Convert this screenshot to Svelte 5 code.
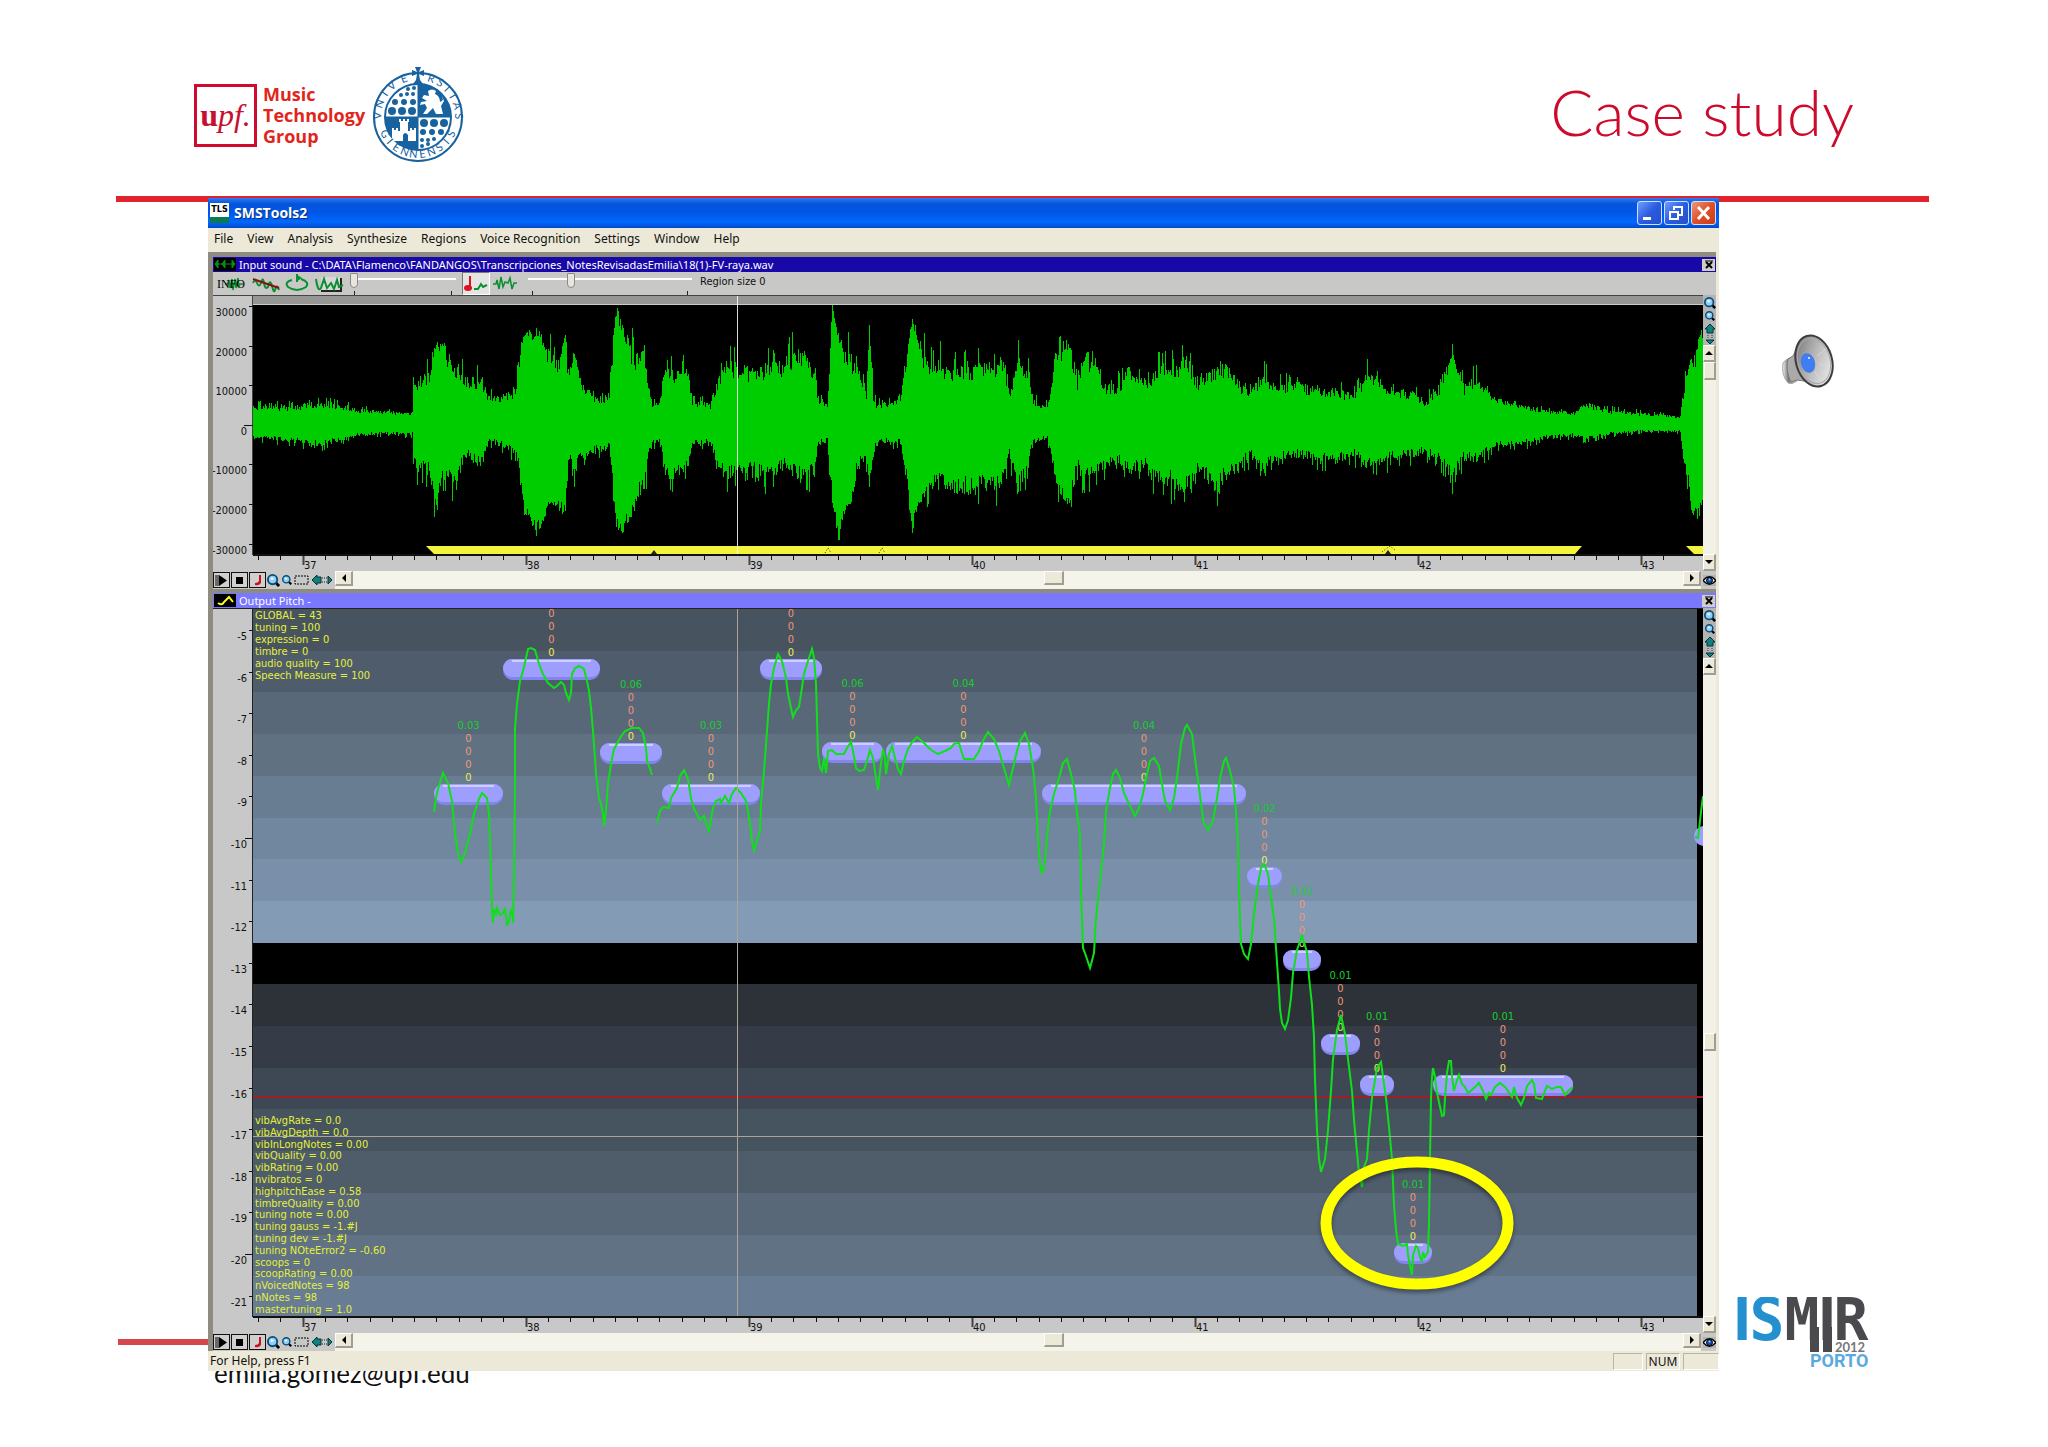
<script>
  const menus = ["File", "View", "Analysis", "Synthesize", "Regions", "Voice Recognition", "Settings", "Window", "Help"];

  // x, amplitude above zero, amplitude below zero
  const envelope = [
    [0, 18, 15], [42, 18, 17], [57, 21, 23], [85, 20, 18], [105, 15, 12], [136, 13, 10], [159, 11, 11], [160, 40, 45],
    [176, 55, 52], [180, 78, 75], [190, 80, 62], [204, 60, 60], [211, 50, 32], [229, 45, 45], [235, 28, 18], [247, 28, 22],
    [263, 35, 33], [266, 75, 52], [271, 88, 88], [283, 96, 110], [295, 75, 82], [305, 66, 84], [312, 92, 90], [316, 40, 28],
    [320, 76, 54], [328, 42, 35], [341, 28, 28], [356, 28, 26], [359, 75, 60], [363, 119, 100], [369, 96, 107], [381, 72, 84],
    [391, 80, 70], [395, 42, 35], [400, 18, 20], [407, 25, 18], [411, 66, 52], [423, 54, 55], [435, 54, 45], [439, 24, 20],
    [457, 20, 20], [461, 36, 30], [472, 66, 56], [500, 54, 45], [512, 60, 56], [530, 64, 45], [548, 78, 58], [560, 56, 50],
    [565, 28, 22], [574, 20, 18], [576, 60, 52], [579, 119, 80], [585, 90, 116], [592, 75, 88], [600, 65, 75], [604, 70, 45],
    [613, 32, 38], [616, 104, 64], [620, 25, 32], [624, 20, 18], [647, 24, 20], [653, 68, 58], [659, 112, 108], [664, 86, 84],
    [675, 66, 70], [684, 68, 66], [692, 56, 66], [719, 58, 70], [730, 60, 66], [750, 62, 62], [756, 32, 32], [764, 66, 72],
    [774, 58, 48], [779, 25, 20], [794, 18, 14], [799, 46, 40], [802, 72, 62], [810, 80, 78], [817, 84, 82], [824, 45, 45],
    [832, 74, 60], [844, 62, 50], [849, 38, 46], [867, 42, 40], [880, 54, 50], [895, 42, 44], [902, 55, 60], [920, 58, 62],
    [934, 70, 70], [944, 44, 46], [960, 54, 66], [974, 62, 56], [987, 40, 42], [997, 34, 34], [1010, 50, 48], [1027, 40, 34],
    [1042, 42, 32], [1065, 36, 38], [1079, 36, 40], [1100, 30, 32], [1115, 52, 46], [1138, 36, 36], [1161, 32, 32],
    [1172, 22, 30], [1188, 42, 38], [1199, 80, 56], [1211, 38, 36], [1222, 50, 38], [1241, 26, 24], [1264, 22, 22],
    [1287, 14, 16], [1322, 12, 12], [1331, 22, 16], [1356, 14, 11], [1387, 11, 8], [1427, 8, 8], [1429, 26, 30],
    [1435, 58, 64], [1438, 66, 90], [1444, 80, 94], [1450, 98, 80],
  ];

  let seed = 7;
  function rand() {
    seed = (seed * 16807) % 2147483647;
    return seed / 2147483647;
  }

  // loud passages stay close to the envelope, quiet ones get stray spikes
  function jitter(level) {
    if (level > 78) return level * (0.9 + rand() * 0.14);
    if (rand() > 0.87) return level * (1.08 + rand() * 0.22);
    return level * (0.74 + rand() * 0.3);
  }

  function waveform() {
    let d = "";
    let k = 0;
    for (let x = 0; x < 1450; x++) {
      while (x >= envelope[k + 1][0]) k++;
      const [x0, u0, d0] = envelope[k];
      const [x1, u1, d1] = envelope[k + 1];
      const t = (x - x0) / (x1 - x0);
      const up = Math.min(119, jitter(u0 + (u1 - u0) * t));
      const down = Math.min(119, jitter(d0 + (d1 - d0) * t));
      d += `M${x} ${Math.round(120 - up)}h1V${Math.round(120 + down)}h-1z`;
    }
    return d;
  }
  const wave = waveform();

  const amplitudes = [30000, 20000, 10000, 0, -10000, -20000, -30000];
  const ticks = Array.from({ length: 64 }, (_, i) => ({ x: Math.round(5 + i * 22.3), major: i % 10 === 2, label: 37 + (i - 2) / 10 }));
  const pitches = Array.from({ length: 17 }, (_, i) => -5 - i);

  const bands = [
    "#47545f", "#4f5c6b", "#586879", "#607282", "#687c92", "#71879f", "#7a90aa", "#839bb5", "#000000",
    "#2d3138", "#363c47", "#3e4854", "#46545f", "#4f5c6a", "#586879", "#607284", "#687c93",
  ];

  const notes = [
    { x: 181, y: 175, w: 69, value: "0.03" },
    { x: 250, y: 50, w: 97, value: "" },
    { x: 347, y: 134, w: 62, value: "0.06" },
    { x: 409, y: 175, w: 98, value: "0.03" },
    { x: 507, y: 50, w: 62, value: "" },
    { x: 569, y: 133, w: 61, value: "0.06" },
    { x: 633, y: 133, w: 155, value: "0.04" },
    { x: 789, y: 175, w: 204, value: "0.04" },
    { x: 994, y: 258, w: 35, value: "0.02" },
    { x: 1030, y: 341, w: 38, value: "0.01" },
    { x: 1068, y: 425, w: 39, value: "0.01" },
    { x: 1107, y: 466, w: 34, value: "0.01" },
    { x: 1180, y: 466, w: 140, value: "0.01" },
    { x: 1141, y: 634, w: 38, value: "0.01" },
  ];

  const curves = [
    "181,203 183,189 185,180 190,164 195,174 199,192 202,225 205,244 208,253 212,244 217,225 221,205 226,190 229,184 234,189 236,205 237,232 239,299 240,314 241,300 243,305 244,299 247,306 250,304 252,300 253,307 254,317 256,312 258,300 260,309 260,314 261,275 262,172 262,119 264,95 267,72 270,62 273,49 275,40 278,39 282,41 286,55 290,65 295,74 301,79 304,77 308,73 311,76 313,84 316,91 318,84 319,65 322,59 326,57 331,60 334,72 336,82 338,99 340,122 342,149 343,165 346,189 348,195 350,205 351,217 353,202 355,175 358,155 361,140 367,129 372,122 379,119 386,119 390,124 393,139 394,152 396,157 399,166",
    "404,214 407,202 410,198 416,199 418,189 424,179 427,167 431,161 435,170 438,189 441,200 444,205 447,211 451,207 453,214 456,222 458,210 460,199 463,192 467,190 468,194 472,187 476,194 479,185 483,179 488,184 493,192 495,202 497,215 499,232 501,241 504,232 507,222 508,195 511,162 514,122 516,95 518,75 521,59 525,45 529,52 533,69 535,85 538,99 540,108 543,101 546,98 548,85 551,65 555,52 559,40 561,49 563,75 564,109 565,145 567,159 569,162 571,149 573,164 575,142 579,141 583,145 591,145 594,139 598,133 600,142 603,159 606,162 611,161 614,152 617,141 620,149 623,169 625,181 627,162 630,140 632,149 633,165 636,145 639,137 642,149 645,160 648,165 651,152 655,140 660,132 664,128 671,134 678,141 685,145 692,142 698,139 701,135 706,134 708,141 711,150 721,150 726,142 730,132 735,123 741,130 746,142 751,159 756,176 760,159 764,142 767,132 772,124 776,135 780,159 783,189 785,229 787,255 789,265 792,252 794,229 797,202 801,185 806,169 810,154 814,150 818,165 822,182 824,205 827,225 828,282 830,339 833,347 837,359 841,344 843,309 847,272 851,235 853,202 857,179 860,165 863,161 867,169 871,184 876,195 882,207 886,199 890,185 893,169 897,152 901,149 906,157 909,175 912,192 917,201 921,189 924,169 928,135 932,119 934,116 939,125 942,149 946,179 949,202 951,215 955,221 960,212 964,189 967,169 971,152 973,149 977,162 981,179 983,202 985,235 986,282 988,335 991,345 995,350 998,335 1001,305 1005,275 1008,259 1011,255 1015,265 1018,289 1021,309 1023,339 1026,382 1027,400 1029,414 1032,420 1035,411 1038,389 1040,364 1044,341 1049,327 1054,343 1056,368 1059,396 1061,428 1062,471 1064,521 1066,550 1068,563 1072,550 1075,521 1078,482 1080,450 1084,421 1088,406 1092,425 1095,450 1099,482 1101,511 1104,543 1106,564 1109,578 1110,561 1114,550 1116,521 1119,489 1122,471 1124,459 1128,453 1130,468 1133,489 1136,518 1139,550 1141,596 1143,621 1145,635 1150,637 1154,635 1155,646 1157,657 1159,666 1160,646 1163,637 1165,639 1167,648 1169,653 1170,643 1172,648 1175,643 1176,614 1177,550 1178,489 1179,468 1180,459 1182,468 1184,484 1186,493 1189,507 1191,506 1192,489 1194,464 1196,452 1198,452 1199,468 1201,482 1204,471 1206,466 1209,475 1212,478 1215,484 1220,480 1226,474 1230,482 1233,490 1236,484 1238,486 1242,478 1247,474 1252,478 1255,482 1259,488 1261,478 1264,489 1268,496 1271,489 1274,477 1279,471 1281,475 1283,489 1289,490 1291,484 1294,477 1299,480 1304,478 1308,478 1312,486 1315,482 1320,478",
    "1442,228 1445,229 1448,203 1450,187",
  ];

  const globals = ["GLOBAL = 43", "tuning = 100", "expression = 0", "timbre = 0", "audio quality = 100", "Speech Measure = 100"];
  const stats = [
    "vibAvgRate = 0.0", "vibAvgDepth = 0.0", "vibInLongNotes = 0.00", "vibQuality = 0.00", "vibRating = 0.00",
    "nvibratos = 0", "highpitchEase = 0.58", "timbreQuality = 0.00", "tuning note = 0.00", "tuning gauss = -1.#J",
    "tuning dev = -1.#J", "tuning NOteError2 = -0.60", "scoops = 0", "scoopRating = 0.00", "nVoicedNotes = 98",
    "nNotes = 98", "mastertuning = 1.0",
  ];

  // motto letters with their angle on the seal's ring
  const mottoTop = [["V", -88], ["N", -71], ["I", -55], ["V", -40], ["E", -20], ["R", 19], ["S", 33], ["I", 46], ["T", 59], ["A", 74], ["S", 89]];
  const mottoBottom = [..."GIENNENSIS"].map((letter, i) => [letter, 63 - i * 14]);

  let gain = $state(0);
  let region = $state(25);
</script>

{#snippet lens(size)}
  <svg width={size} height={size} viewBox="0 0 14 14" aria-hidden="true">
    <path d="M9 9l4 4" stroke="#000" stroke-width="3" />
    <circle cx="6" cy="6" r="5" fill="#8fd0f4" stroke="#0b4a78" stroke-width="2" />
    <path d="M4 4h3v2H4z" fill="#fff" />
  </svg>
{/snippet}

{#snippet eye()}
  <button type="button" class="eye" aria-label="View">
    <svg width="13" height="11" viewBox="0 0 13 11" aria-hidden="true">
      <path d="M0 5.500Q6.500-2 13 5.500Q6.500 13 0 5.500z" fill="#fff" stroke="#000" stroke-width="1.500" />
      <circle cx="6.500" cy="5.500" r="3" fill="#1850b0" stroke="#000" />
      <circle cx="6.500" cy="4.500" r="1" fill="#9cf" />
    </svg>
  </button>
{/snippet}

{#snippet ruler(y)}
  <g transform="translate(40 {y})">
    <path d="M0 0H1450" stroke="#111" stroke-width="2" />
    {#each ticks as t}
      <path d="M{t.x}.5 1V{t.major ? 10 : 5}" stroke={t.major ? "#444" : "#111"} stroke-width={t.major ? 2 : 1} />
      {#if t.major}<text x={t.x + 1} y="14">{t.label}</text>{/if}
    {/each}
  </g>
{/snippet}

{#snippet closeBox(label)}
  <button type="button" aria-label={label}>
    <svg width="10" height="9" viewBox="0 0 10 9"><path d="M2 2l6 6M8 2L2 8" stroke="#000" stroke-width="2" /><path d="M1 1h8" stroke="#000" /></svg>
  </button>
{/snippet}

{#snippet sideBar(before, after)}
  <div class="side">
    <button type="button" aria-label="Zoom in">{@render lens(12)}</button>
    <button type="button" aria-label="Zoom out">{@render lens(10)}</button>
    <button type="button" aria-label="Fit vertically">
      <svg width="12" height="22" viewBox="0 0 12 22" aria-hidden="true">
        <path d="M6 1l5 5H9v4H3V6H1z" fill="#128080" stroke="#033" />
        <path d="M4 12v4M8 12v4" stroke="#333" stroke-dasharray="1 1" />
        <path d="M6 21L2 17h8z" fill="#128080" stroke="#033" />
      </svg>
    </button>
    <button type="button" class="arrow" aria-label="Scroll up"><i class="tri up"></i></button>
    <span style="flex-grow: {before}"></span>
    <span class="thumb"></span>
    <span style="flex-grow: {after}"></span>
    <button type="button" class="arrow" aria-label="Scroll down"><i class="tri down"></i></button>
  </div>
{/snippet}

{#snippet transport()}
  <div class="transport">
    <button type="button" class="play" aria-label="Play"><svg width="13" height="11" viewBox="0 0 13 11"><path d="M1 0v11M3 0v11" stroke="#000" /><path d="M4 0l8 5.500L4 11z" /></svg></button>
    <button type="button" class="play" aria-label="Stop"><svg width="13" height="11" viewBox="0 0 13 11"><path d="M3 2h7v7H3z" /></svg></button>
    <button type="button" class="play" aria-label="Play note"><svg width="13" height="11" viewBox="0 0 13 11"><path d="M8 0h2v8q-2 3-6 2V8q3 0 4-2z" fill="#d01020" /></svg></button>
    <button type="button" aria-label="Zoom in">{@render lens(13)}</button>
    <button type="button" aria-label="Zoom out">{@render lens(10)}</button>
    <button type="button" aria-label="Select"><svg width="15" height="12" viewBox="0 0 15 12"><path d="M1 2h13v8H1z" fill="none" stroke="#000" stroke-dasharray="2 1" /></svg></button>
    <button type="button" aria-label="Fit">
      <svg width="22" height="12" viewBox="0 0 22 12">
        <path d="M1 6l5-5v2h4v6H6v2z" fill="#128080" stroke="#033" />
        <path d="M11 4h5M11 8h5" stroke="#222" stroke-dasharray="1 1" />
        <path d="M21 6l-4-4v8z" fill="#128080" stroke="#033" />
      </svg>
    </button>
    <div class="scroll">
      <button type="button" class="arrow" aria-label="Scroll left"><i class="tri left"></i></button>
      <span class="before"></span>
      <span class="thumb"></span>
      <span class="after"></span>
      <button type="button" class="arrow" aria-label="Scroll right"><i class="tri right"></i></button>
    </div>
    {@render eye()}
  </div>
{/snippet}

<main class="slide">
  <header>
    <div class="brand">
      <span class="upf"><b>u</b><i>pf.</i></span>
      <span class="group">Music<br />Technology<br />Group</span>
      <svg class="seal" width="92" height="98" viewBox="0 0 92 98" role="img" aria-label="Universitas Giennensis">
        <circle cx="46" cy="52" r="44" fill="#fff" stroke="#17629f" stroke-width="2" />
        <circle cx="46" cy="52" r="33" fill="#fff" stroke="#17629f" stroke-width="2" />
        <path d="M46 52V19a33 33 0 0 1 33 33zM46 52v33a33 33 0 0 1-33-33z" fill="#17629f" />
        <path d="M46 20v64M14 52h64" stroke="#17629f" stroke-width="1" />
        <g fill="#17629f">
          <circle cx="20" cy="46" r="4" /><circle cx="30" cy="46" r="4" /><circle cx="40" cy="46" r="4" />
          <circle cx="23" cy="37" r="3" /><circle cx="32" cy="37" r="3" /><circle cx="41" cy="37" r="3" />
          <circle cx="29" cy="30" r="2" /><circle cx="35" cy="29" r="2" /><circle cx="41" cy="29" r="2" />
          <circle cx="36" cy="24" r="2" /><circle cx="42" cy="23" r="2" />
          <circle cx="52" cy="58" r="4" /><circle cx="62" cy="58" r="4" /><circle cx="72" cy="58" r="4" />
          <circle cx="51" cy="67" r="3" /><circle cx="60" cy="67" r="3" /><circle cx="69" cy="67" r="3" />
          <circle cx="50" cy="75" r="2" /><circle cx="56" cy="75" r="2" /><circle cx="62" cy="74" r="2" />
          <circle cx="50" cy="81" r="2" /><circle cx="56" cy="79" r="2" />
        </g>
        <path d="M20 76V63h2v2h2v-2h2v3h2V57h-1v-3h2v2h2v-2h2v2h2v-2h2v3h-1v9h2v-3h2v2h2v-2h2v13h-8v-6q-3-4-5 0v6z" fill="#fff" />
        <path d="M56 26q4-3 8 0l-1 3q5 2 5 8l3-2-1-4 2 5-3 5 2 8h-7l-3-6-6 6h-4l4-6-2-4-5 1 1-3 6-1-5-3 2-3 5 1z" fill="#fff" />
        <path d="M43 2h6l-2 5 5-2v6l-5-2 1 6 3 4H41l3-4 1-6-5 2V5l5 2z" fill="#17629f" />
        {#each mottoTop as [letter, angle]}
          <text class="motto" x="46" y="15" text-anchor="middle" transform="rotate({angle} 46 52)">{letter}</text>
        {/each}
        {#each mottoBottom as [letter, angle]}
          <text class="motto" x="46" y="93" text-anchor="middle" transform="rotate({angle} 46 52)">{letter}</text>
        {/each}
      </svg>
    </div>
    <h1>Case study</h1>
  </header>
  <div class="rule"></div>

  <div class="body">
    <div class="gutter"><div class="footline"></div></div>

    <section class="app">
      <div class="titlebar">
        <span class="appicon">TLS</span>
        <span class="name">SMSTools2</span>
        <button type="button" aria-label="Minimize"><svg width="23" height="22" viewBox="0 0 23 22"><path d="M5 15h8v3H5z" fill="#fff" /></svg></button>
        <button type="button" aria-label="Restore"><svg width="23" height="22" viewBox="0 0 23 22" fill="none" stroke="#fff" stroke-width="2"><path d="M5 10h8v7H5zM9 8V5h8v8h-3" /></svg></button>
        <button type="button" class="close" aria-label="Close"><svg width="23" height="22" viewBox="0 0 23 22"><path d="M6 5l11 12M17 5L6 17" stroke="#fff" stroke-width="3" /></svg></button>
      </div>
      <nav class="menubar">
        {#each menus as menu}<button type="button">{menu}</button>{/each}
      </nav>

      <div class="workspace">
        <div class="subtitle input">
          <svg width="22" height="13" viewBox="0 0 22 13" aria-hidden="true"><path d="M0 0h22v13H0z" /><path d="M1 6l3-4v8zM8 6l3-4v8zM21 6l-3-4v8zM1 6h20" fill="#0a8c18" stroke="#0a8c18" /></svg>
          <span>Input sound - C:\DATA\Flamenco\FANDANGOS\Transcripciones_NotesRevisadasEmilia\18(1)-FV-raya.wav</span>
          {@render closeBox("Close input sound")}
        </div>
        <div class="toolbar">
          <button type="button" class="info" aria-label="Info">
            <svg width="34" height="20" viewBox="0 0 34 20"><path d="M9 10h3l1-4 1 8 2-9 1 11 2-11 1 9 2-10 1 9 1-3h3" fill="none" stroke="#0a9030" stroke-width="1.500" /><text x="1" y="14">INFO</text></svg>
          </button>
          <button type="button" aria-label="Mute">
            <svg width="28" height="20" viewBox="0 0 28 20" fill="none"><path d="M1 9q2-5 4 0t4 0q2-7 3 0t4 4q2-9 4-1t3 4q2-7 4 0" stroke="#0a9030" stroke-width="2" /><path d="M1 5l26 9" stroke="#8a1010" stroke-width="2" /></svg>
          </button>
          <button type="button" aria-label="Loop">
            <svg width="30" height="20" viewBox="0 0 30 20" fill="none"><path d="M10 6q-8 2-4 7 9 6 18 0 4-5-5-8M15 0v8" stroke="#0a9030" stroke-width="2" /><path d="M14 0l6 4-6 4z" fill="#0a9030" /></svg>
          </button>
          <button type="button" aria-label="Window">
            <svg width="32" height="20" viewBox="0 0 32 20" fill="none"><path d="M7 3h19v13H7z" fill="#d8d8d8" /><path d="M7 17h20V4" stroke="#222" stroke-width="2" /><path d="M2 5q2 14 5 9l3-9 3 9 4-5 3 6 3-9 2 7 4-2" stroke="#0a9030" stroke-width="2" /></svg>
          </button>
          <label class="slider short"><input type="range" min="0" max="100" bind:value={gain} aria-label="Gain" /><span></span></label>
          <button type="button" class="pressed" aria-label="Notes">
            <svg width="26" height="20" viewBox="0 0 26 20" fill="none"><path d="M7 2v12" stroke="#e01020" stroke-width="2" /><ellipse cx="5" cy="14" rx="4" ry="3" fill="#e01020" /><path d="M11 15h4l3-5 2 3 4-2" stroke="#0a9030" stroke-width="2" /></svg>
          </button>
          <button type="button" aria-label="Wave">
            <svg width="26" height="20" viewBox="0 0 26 20"><path d="M1 10h3l1-4 2 9 2-12 2 10 2-5 3 1 2-5 2 11 2-6h3" fill="none" stroke="#0a9030" stroke-width="1.500" /></svg>
          </button>
          <label class="slider long"><input type="range" min="0" max="100" bind:value={region} aria-label="Region size" /><span></span></label>
          <output>Region size 0</output>
        </div>

        <div class="panel">
          <svg class="plot" viewBox="0 0 1490 276">
            <path d="M0 0H1490V276H0z" fill="#c8c8c8" />
            <path d="M40 1H1490V10H40z" fill="#969694" />
            <path d="M0 0H1490V1H0zM39 0h1V260h-1z" fill="#444" />
            <path d="M40 9H1490V10H40z" fill="#ccc" />
            <path d="M40 10H1490V260H40z" fill="#000" />
            {#each amplitudes as a, i}
              <path d="M{a ? 36 : 31} {Math.round(11 + i * 39.6)}.5H40" stroke="#111" />
              <text x="34" y={Math.round(21 + i * 39.6)} text-anchor="end">{a}</text>
            {/each}
            <path d={wave} transform="translate(40 9)" fill="#00cd00" shape-rendering="crispEdges" />
            <path d="M213 251H1369L1362 259H221zM1473 251H1490V259H1481z" fill="#f4f43c" />
            <path d="M438 259l3-4 3 4zM1172 259l3-4 3 4z" fill="#222" />
            <path d="M612 258l3-5 3 5M666 258l3-5 3 5M1169 257l8-6 5 4" stroke="#222" stroke-dasharray="1 2" fill="none" />
            <path d="M524.500 1V260" stroke="#fff" stroke-opacity="0.850" />
            {@render ruler(260)}
          </svg>
          {@render sideBar(0, 1)}
        </div>
        {@render transport()}

        <div class="subtitle output">
          <svg width="22" height="13" viewBox="0 0 22 13" aria-hidden="true"><path d="M0 0h22v13H0z" /><path d="M4 9q4 3 6-1l5-5 4 5" stroke="#ff2" stroke-width="2" fill="none" /></svg>
          <span>Output Pitch -</span>
          {@render closeBox("Close output pitch")}
        </div>
        <div class="panel">
          <svg class="plot pitch" viewBox="0 0 1490 725">
            <path d="M0 0H1490V725H0z" fill="#c8c8c8" />
            <path d="M0 0H1490V1H0zM39 0h1V709h-1z" fill="#222" />
            {#each pitches as p, i}
              <path d="M{p % 10 ? 36 : 32} {Math.round(22 + i * 41.6)}.5H40" stroke="#111" />
              <text x="34" y={Math.round(32 + i * 41.6)} text-anchor="end">{p}</text>
            {/each}
            <svg x="40" y="1" width="1450" height="708" viewBox="0 0 1450 708">
              <path d="M0 0H1450V708H0z" />
              {#each bands as fill, i}
                <rect x="0" y={Math.round(i * 41.7)} width="1444" height="42" {fill} shape-rendering="crispEdges" />
              {/each}
              <path d="M0 488H1450" stroke="#a01c26" stroke-width="2" />
              <circle cx="1451" cy="227" r="10" fill="#9e9eff" />
              {#each notes as n}
                <rect x={n.x} y={n.y} width={n.w} height="21" rx="10" fill="#8484ee" />
                <rect x={n.x} y={n.y} width={n.w} height="18" rx="9" fill="#9e9eff" />
                <rect x={n.x + 9} y={n.y + 1} width={n.w - 18} height="2" fill="#ceceff" />
                <g text-anchor="middle">
                  {#if n.value}<text class="value" x={n.x + n.w / 2} y={n.y - 55}>{n.value}</text>{/if}
                  {#each [42, 29, 16] as dy}<text class="zero" x={n.x + n.w / 2} y={n.y - dy}>0</text>{/each}
                  <text class="base" x={n.x + n.w / 2} y={n.y - 3}>0</text>
                </g>
              {/each}
              {#each curves as points}
                <polyline {points} fill="none" stroke="#0fe01a" stroke-width="2" />
              {/each}
              {#each globals as line, i}<text class="stat" x="2" y={10 + i * 12}>{line}</text>{/each}
              <path d="M0 527.500H1450M484.500 0V708" stroke="#aaa49c" />
              {#each stats as line, i}<text class="stat" x="2" y={Math.round(515 + i * 11.8)}>{line}</text>{/each}
              <ellipse class="mark" cx="1164" cy="614" rx="91" ry="61" fill="none" stroke="#ffff00" stroke-width="11" />
            </svg>
            {@render ruler(709)}
          </svg>
          {@render sideBar(356, 264)}
        </div>
        {@render transport()}
      </div>

      <div class="statusbar">
        <span class="hint">For Help, press F1</span>
        <span class="cell"></span>
        <span class="cell num">NUM</span>
        <span class="cell last"></span>
      </div>
    </section>

    <aside>
      <button type="button" class="speaker" aria-label="Play audio">
        <svg width="54" height="54" viewBox="0 0 54 54" aria-hidden="true">
          <defs>
            <linearGradient id="cone" x1="0" y1="0" x2="1" y2="1">
              <stop offset="0" stop-color="#6c6c6c" /><stop offset="0.500" stop-color="#bbb" /><stop offset="1" stop-color="#fafafa" />
            </linearGradient>
            <linearGradient id="magnet" x1="0" y1="0" x2="1" y2="0">
              <stop offset="0" stop-color="#f4f4f4" /><stop offset="0.400" stop-color="#777" /><stop offset="1" stop-color="#ddd" />
            </linearGradient>
          </defs>
          <path d="M2 29q2-4 8-5l6 23q-5 4-9 2-7-8-5-20z" fill="url(#magnet)" stroke="#aaa" />
          <path d="M7 25l5-3L20 6l12 44q-10-4-16-4l-6 2q-6-12-3-23z" fill="#aaa" stroke="#777" />
          <ellipse cx="33" cy="27" rx="18" ry="26" transform="rotate(-16 33 27)" fill="url(#cone)" stroke="#3c3c3c" stroke-width="2" />
          <ellipse cx="33" cy="27" rx="16" ry="23" transform="rotate(-16 33 27)" fill="none" stroke="#aaa" />
          <path d="M36 22l10-8M38 30l11 3M34 38l6 9" stroke="#d8d8d8" />
          <ellipse cx="27" cy="29" rx="7" ry="10" transform="rotate(-14 27 29)" fill="#3f7df0" />
          <circle cx="28" cy="24" r="1" fill="#fff" />
        </svg>
      </button>
      <svg class="ismir" width="136" height="74" viewBox="0 0 136 74">
        <path d="M73 30h9v25h-9zM86 30h9v25h-9z" fill="#4a494d" />
        <text class="stem" x="5" y="43" text-anchor="middle" fill="#2490cf">I</text>
        <text class="big" x="30" y="43" text-anchor="middle" fill="#2490cf">S</text>
        <text class="big" x="65" y="43" text-anchor="middle" fill="#4a494d">M</text>
        <text class="stem" x="90" y="43" text-anchor="middle" fill="#4a494d">I</text>
        <text class="big" x="114" y="43" text-anchor="middle" fill="#4a494d">R</text>
        <text class="year" x="98" y="55">2012</text>
        <text class="city" x="73" y="70">PORTO</text>
      </svg>
    </aside>
  </div>
  <a class="mail" href="mailto:emilia.gomez@upf.edu">emilia.gomez@upf.edu</a>
</main>

<style>
  :global(body) {
    margin: 0;
    background: #fff;
  }
  .slide {
    font-family: "DejaVu Sans Condensed", "DejaVu Sans", sans-serif;
    font-size: 11px;
    color: #111;
    overflow: hidden;
  }
  button {
    font: inherit;
    color: inherit;
    border: 0;
    padding: 0;
    background: none;
  }
  svg {
    display: block;
  }
  header {
    display: flex;
    justify-content: space-between;
    align-items: center;
    height: 196px;
    box-sizing: border-box;
    padding: 0 194px 0 194px;
  }
  .brand {
    display: flex;
    align-items: center;
    padding-top: 34px;
  }
  .upf {
    display: flex;
    align-items: center;
    justify-content: center;
    width: 57px;
    height: 57px;
    border: 3px solid #d2092f;
    color: #c8102e;
    font: 32px/1 "Liberation Serif", serif;
  }
  .group {
    margin-left: 6px;
    width: 105px;
    font: bold 18px/21px "Open Sans", sans-serif;
    color: #e1251b;
  }
  .seal {
    margin: -3px 0 0 4px;
    overflow: visible;
  }
  .motto {
    font: 11px "Lato", sans-serif;
    fill: #17629f;
  }
  h1 {
    margin: 28px 0 0;
    font: 300 64px/80px "Lato", sans-serif;
    color: #cd0a2b;
  }
  .rule {
    height: 6px;
    margin: 0 119px 0 116px;
    background: #e1232e;
  }
  .body {
    display: flex;
    margin-top: -4px;
    position: relative;
    z-index: 1;
  }
  .gutter {
    width: 208px;
    display: flex;
    flex-direction: column;
    justify-content: flex-end;
  }
  .footline {
    height: 6px;
    margin: 0 0 26px 118px;
    background: #d5474d;
  }
  .app {
    flex: 1;
    min-width: 0;
    background: #ece9d8;
  }
  .titlebar {
    display: flex;
    align-items: center;
    gap: 2px;
    height: 30px;
    padding: 0 3px 0 2px;
    background: linear-gradient(#2a7cf0, #0553dd 20%, #0058e8 50%, #0268fe 80%, #0048c8);
  }
  .appicon {
    width: 19px;
    height: 20px;
    border-bottom: 6px solid #0a7a50;
    box-sizing: border-box;
    background: #fff;
    font: bold 9px/13px "DejaVu Sans Condensed", sans-serif;
    text-align: center;
    color: #000;
  }
  .name {
    flex: 1;
    margin-left: 3px;
    font: bold 14px/20px "Open Sans", sans-serif;
    color: #fff;
    text-shadow: 1px 1px 1px #0a2a80;
  }
  .titlebar button {
    width: 25px;
    height: 24px;
    border: 1px solid #cfe0ff;
    border-radius: 3px;
    background: linear-gradient(135deg, #6f9cff, #2a5ce0 50%, #2650c8);
  }
  .titlebar .close {
    background: linear-gradient(135deg, #f09878, #e0502a 50%, #c83c14);
  }
  .menubar {
    display: flex;
    align-items: flex-start;
    gap: 14px;
    height: 24px;
    padding-left: 6px;
    font: 12px/22px "Noto Sans", sans-serif;
  }
  .workspace {
    border: solid #8e8c80;
    border-width: 5px 0 0 5px;
    margin-right: 3px;
    background: #8e8c80;
  }
  .subtitle {
    display: flex;
    align-items: center;
    gap: 3px;
    height: 15px;
    padding: 0 1px;
    color: #fff;
  }
  .subtitle span {
    flex: 1;
    font: 11px/15px "Noto Sans", sans-serif;
    white-space: nowrap;
  }
  .subtitle button {
    width: 13px;
    height: 12px;
    display: grid;
    place-items: center;
    background: #d0cec4;
  }
  .input {
    background: #1808a8;
  }
  .output {
    margin-top: 4px;
    background: #7a78ff;
  }
  .toolbar {
    display: flex;
    align-items: center;
    height: 23px;
    padding-left: 3px;
    background: #c8c8c6;
  }
  .toolbar output {
    margin-left: 8px;
    line-height: 20px;
    align-self: flex-start;
  }
  .info text {
    font: 12px "Liberation Serif", serif;
  }
  .toolbar button {
    margin-right: 2px;
  }
  .toolbar .pressed {
    background: #e4e4e2;
    border: 1px solid #fff;
    border-top-color: #777;
    border-left-color: #777;
    box-sizing: border-box;
    height: 23px;
  }
  .slider {
    display: block;
    height: 23px;
  }
  .slider.short {
    width: 106px;
    margin-left: 2px;
    margin-right: 6px;
  }
  .slider.long {
    width: 164px;
    margin-left: 8px;
  }
  .slider input {
    appearance: none;
    display: block;
    width: 100%;
    height: 16px;
    margin: 0;
    background: linear-gradient(transparent 5px, #999 5px, #fff 6px, #fff 8px, transparent 8px);
  }
  .slider input::-webkit-slider-thumb {
    appearance: none;
    width: 8px;
    height: 15px;
    background: #e8e6da;
    border: 1px solid #888;
    border-radius: 1px 1px 4px 4px;
  }
  .slider span {
    display: block;
    height: 4px;
    margin: 3px 4px 0 4px;
    border: solid #222;
    border-width: 0 1px;
  }
  .panel {
    display: flex;
  }
  .plot {
    flex: 1;
    min-width: 0;
    height: auto;
  }
  .plot text {
    font-size: 11px;
    fill: #111;
  }
  .pitch .stat {
    fill: #e4f03c;
  }
  .pitch .value {
    fill: #14d02c;
  }
  .pitch .zero {
    fill: #ef9678;
  }
  .pitch .base {
    fill: #f0ec5c;
  }
  .mark {
    filter: drop-shadow(0 3px 2px rgba(0, 0, 0, 0.4));
  }
  .side {
    display: flex;
    flex-direction: column;
    align-items: center;
    width: 13px;
    background: linear-gradient(#b4b4b4 52px, #f2f1e8 52px);
  }
  .side button:nth-child(-n + 3) {
    margin-top: 2px;
  }
  .side .arrow {
    width: 13px;
    height: 17px;
  }
  .side .thumb {
    width: 12px;
    height: 18px;
  }
  .arrow,
  .thumb {
    display: grid;
    place-items: center;
    box-sizing: border-box;
    background: #ece9d8;
    border: 1px solid #fff;
    border-right: 2px solid #a09e90;
    border-bottom: 2px solid #a09e90;
  }
  .tri {
    border: 4px solid transparent;
  }
  .up {
    border-top: 0;
    border-bottom-color: #000;
  }
  .down {
    border-bottom: 0;
    border-top-color: #000;
  }
  .left {
    border-left: 0;
    border-right-color: #000;
  }
  .right {
    border-right: 0;
    border-left-color: #000;
  }
  .transport {
    display: flex;
    align-items: center;
    gap: 2px;
    height: 18px;
    background: #c8c8c6;
  }
  .transport .play {
    width: 17px;
    height: 16px;
    margin-right: -1px;
    box-sizing: border-box;
    border: 1px solid #111;
    display: grid;
    place-items: center;
    background: #d0d0ce;
  }
  .scroll {
    flex: 1;
    display: flex;
    align-items: flex-start;
    height: 18px;
    background: #f4f4ea;
  }
  .scroll .arrow {
    width: 18px;
    height: 15px;
  }
  .scroll .thumb {
    width: 20px;
    height: 14px;
  }
  .before {
    flex: 692;
  }
  .after {
    flex: 619;
  }
  .eye {
    width: 13px;
    background: #b4b4b4;
  }
  .statusbar {
    display: flex;
    align-items: center;
    gap: 3px;
    height: 20px;
    padding-left: 2px;
    font: 12px/20px "Noto Sans", sans-serif;
  }
  .hint {
    flex: 1;
  }
  .cell {
    width: 28px;
    height: 15px;
    border: 1px solid #c8c5b0;
    border-color: #b8b5a0 #fff #fff #b8b5a0;
    line-height: 15px;
    text-align: center;
  }
  .num {
    width: 32px;
  }
  .last {
    width: 34px;
  }
  aside {
    width: 329px;
    box-sizing: border-box;
    display: flex;
    flex-direction: column;
    justify-content: space-between;
    align-items: flex-start;
    padding: 136px 0 0 18px;
  }
  .speaker {
    margin-left: 44px;
  }
  .big {
    font: bold 58px "DejaVu Sans Mono", monospace;
  }
  .stem {
    font: 900 60px "Lato", sans-serif;
  }
  .year {
    font: bold 13px "Lato", sans-serif;
    fill: #77767a;
  }
  .city {
    font: bold 18px "Roboto", sans-serif;
    fill: #5aaade;
  }
  .mail {
    display: block;
    width: max-content;
    margin: -14px 0 0 214px;
    font: 26px/32px "Lato", sans-serif;
    color: #111;
    text-decoration: none;
  }
</style>
